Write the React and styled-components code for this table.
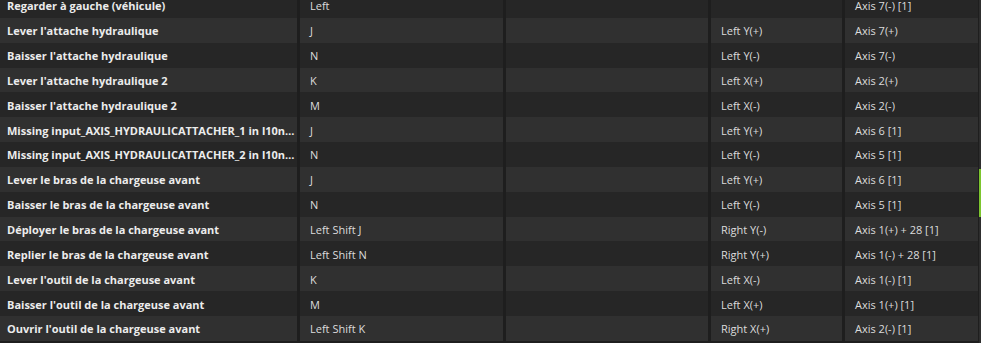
import React from "react";
import styled, { createGlobalStyle } from "styled-components";

const GlobalStyle = createGlobalStyle`
  html, body {
    margin: 0;
    padding: 0;
    background: #1e1e1e;
    overflow: hidden;
  }
  body {
    font-family: "Open Sans", "Liberation Sans", sans-serif;
  }
`;

const Page = styled.div`
  display: flex;
  height: 343px;
  overflow: hidden;
  background: #1e1e1e;
`;

const Table = styled.div`
  flex: 1;
  display: flex;
  flex-direction: column;
  margin-top: -7px;
`;

const Row = styled.div`
  display: grid;
  grid-template-columns: 297px 203px 202px 131px 133px;
  column-gap: 3px;
  height: 24.85px;
  flex: none;

  & > div {
    background: ${(p) => (p.$alt ? "#303030" : "#262626")};
  }
`;

const Cell = styled.div`
  display: flex;
  align-items: center;
  padding: 1px 0 0 ${(p) => (p.$first ? "7px" : "10px")};
  min-width: 0;
  font-size: 11px;
  font-weight: ${(p) => (p.$first ? 700 : 400)};
  color: ${(p) => (p.$first ? "#ececec" : "#dcdcdc")};
  white-space: nowrap;
  overflow: hidden;
`;

const Scrollbar = styled.div`
  width: 2px;
  margin-left: 1px;
  background: #2e2e2e;
  display: flex;
  flex-direction: column;
  padding-top: 169px;
`;

const Thumb = styled.div`
  height: 48px;
  background: #7cc52e;
`;

const rows = [
  ["Regarder à gauche (véhicule)", "Left", "", "", "Axis 7(-) [1]"],
  ["Lever l'attache hydraulique", "J", "", "Left Y(+)", "Axis 7(+)"],
  ["Baisser l'attache hydraulique", "N", "", "Left Y(-)", "Axis 7(-)"],
  ["Lever l'attache hydraulique 2", "K", "", "Left X(+)", "Axis 2(+)"],
  ["Baisser l'attache hydraulique 2", "M", "", "Left X(-)", "Axis 2(-)"],
  ["Missing input_AXIS_HYDRAULICATTACHER_1 in l10n…", "J", "", "Left Y(+)", "Axis 6 [1]"],
  ["Missing input_AXIS_HYDRAULICATTACHER_2 in l10n…", "N", "", "Left Y(-)", "Axis 5 [1]"],
  ["Lever le bras de la chargeuse avant", "J", "", "Left Y(+)", "Axis 6 [1]"],
  ["Baisser le bras de la chargeuse avant", "N", "", "Left Y(-)", "Axis 5 [1]"],
  ["Déployer le bras de la chargeuse avant", "Left Shift J", "", "Right Y(-)", "Axis 1(+) + 28 [1]"],
  ["Replier le bras de la chargeuse avant", "Left Shift N", "", "Right Y(+)", "Axis 1(-) + 28 [1]"],
  ["Lever l'outil de la chargeuse avant", "K", "", "Left X(-)", "Axis 1(-) [1]"],
  ["Baisser l'outil de la chargeuse avant", "M", "", "Left X(+)", "Axis 1(+) [1]"],
  ["Ouvrir l'outil de la chargeuse avant", "Left Shift K", "", "Right X(+)", "Axis 2(-) [1]"],
];

const App = () => {
  return (
    <>
      <GlobalStyle />
      <Page>
        <Table>
          {rows.map((r, i) => (
            <Row key={i} $alt={i % 2 === 1}>
              {r.map((c, j) => (
                <Cell key={j} $first={j === 0}>
                  {c}
                </Cell>
              ))}
            </Row>
          ))}
        </Table>
        <Scrollbar>
          <Thumb />
        </Scrollbar>
      </Page>
    </>
  );
};

export default App;
